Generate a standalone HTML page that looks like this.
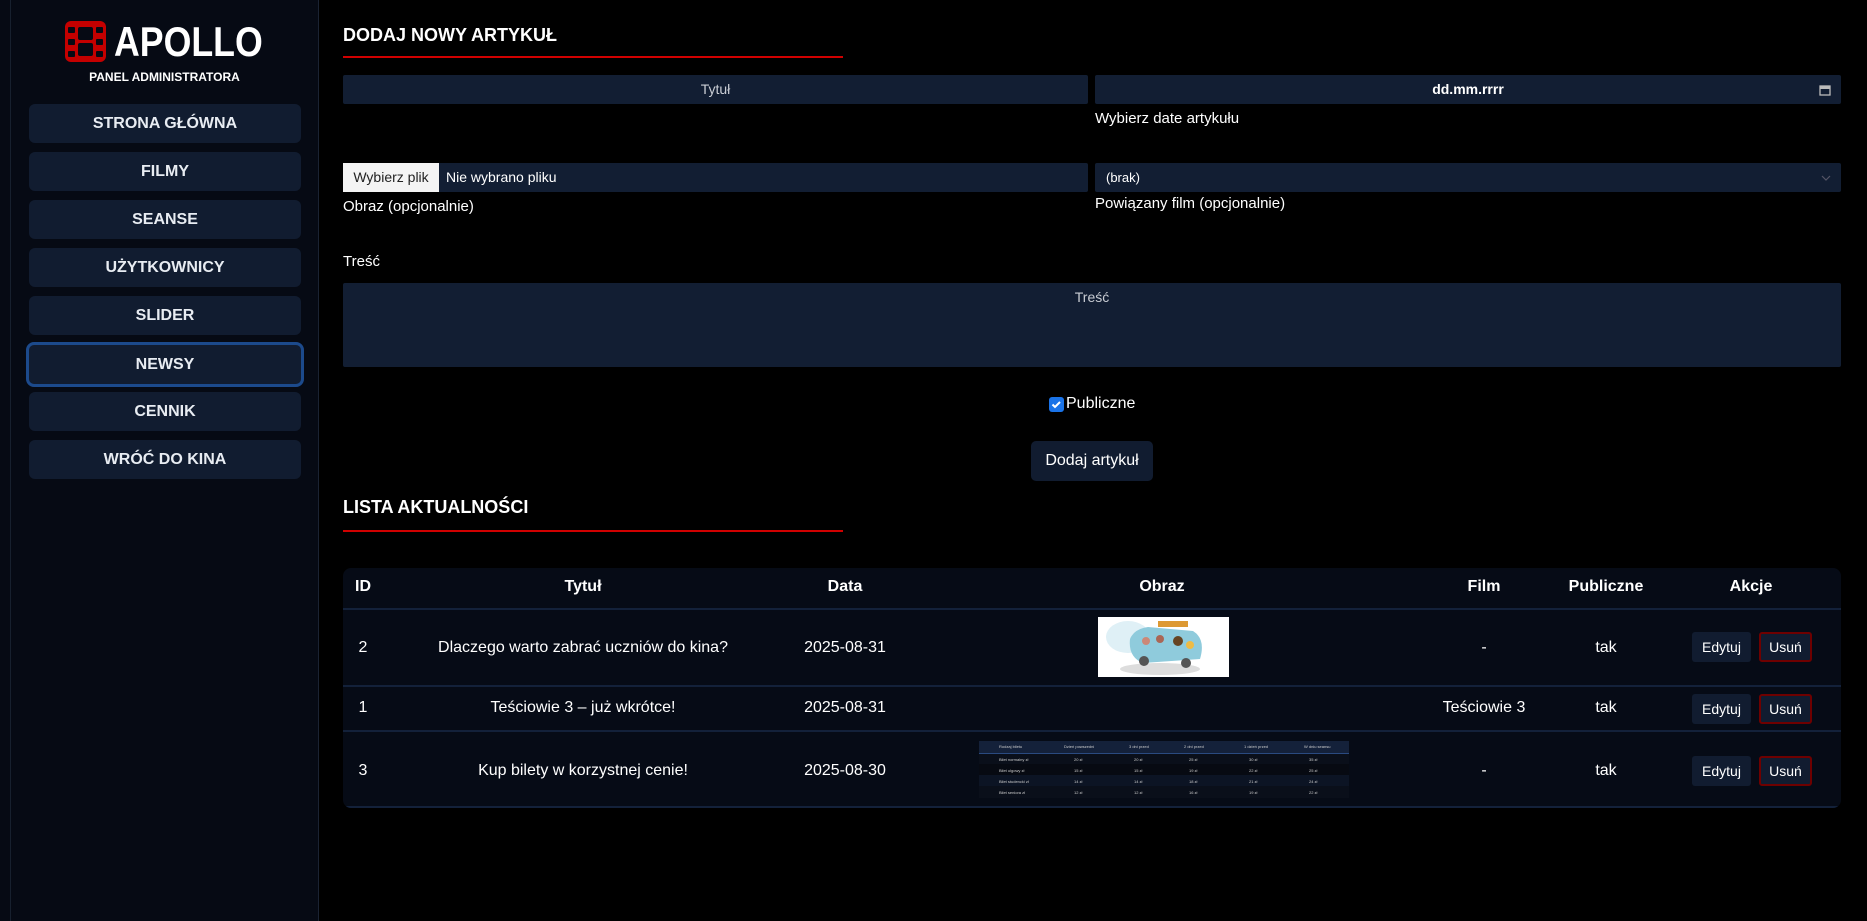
<!DOCTYPE html>
<html><head><meta charset="utf-8">
<style>
*{box-sizing:border-box;margin:0;padding:0}
html,body{width:1867px;height:921px;background:#000;overflow:hidden;font-family:"Liberation Sans",Arial,sans-serif;color:#fff}
.side{position:absolute;left:0;top:0;width:319px;height:921px;background:#060a14;border-right:1px solid #1a2333}
.side:before{content:"";position:absolute;left:10px;top:0;width:1px;height:921px;background:#17202e}
.logo{position:absolute;left:65px;top:21px;width:41px;height:41px;background:#c40000;border-radius:6px}
.logo i{position:absolute;width:7px;height:6px;background:#060a14;border-radius:1px}
.logo b{position:absolute;left:13px;width:15px;height:13px;background:#060a14;border-radius:2px}
.apollo{position:absolute;left:114px;top:18px;font-size:42px;font-weight:bold;transform:scaleX(0.85);transform-origin:left top}
.panel{position:absolute;left:0;width:319px;text-align:center;top:70px;font-size:12px;font-weight:bold;padding-left:10px}
.nav{position:absolute;left:29px;width:272px;height:39px;background:#111c30;border-radius:6px;text-align:center;line-height:39px;font-size:16px;font-weight:bold;color:#e8ecf2}
.nav.act{left:26px;width:278px;height:45px;line-height:39px;border:3px solid #1c4a8c;border-radius:8px}
.h{position:absolute;left:343px;font-size:18px;font-weight:bold}
.red{position:absolute;left:343px;width:500px;height:2px;background:#d00000}
.inp{position:absolute;background:#121e33;border-radius:2px;color:#c9cdd4;font-size:14px;text-align:center}
.lbl{position:absolute;font-size:15px;color:#fff}
.tbl{position:absolute;left:343px;top:568px;width:1498px;height:240px;background:#060b16;border-radius:8px;overflow:hidden}
.line{position:absolute;left:0;width:1498px;height:2px;background:#13213a}
.t{position:absolute;font-size:16px;transform:translateX(-50%);white-space:nowrap}
.th{font-weight:bold}
.btn{position:absolute;height:30px;line-height:30px;font-size:14px;text-align:center;background:#111c30;border-radius:3px;color:#fff}
.del{border:2px solid #6e0000;line-height:26px}
</style></head><body>
<div class="side">
  <div class="logo">
    <i style="left:3px;top:6px"></i><i style="left:3px;top:18px"></i><i style="left:3px;top:30px"></i>
    <i style="left:31px;top:6px"></i><i style="left:31px;top:18px"></i><i style="left:31px;top:30px"></i>
    <b style="top:6px"></b><b style="top:22px"></b>
  </div>
  <div class="apollo">APOLLO</div>
  <div class="panel">PANEL ADMINISTRATORA</div>
  <div class="nav" style="top:104px">STRONA GŁÓWNA</div>
  <div class="nav" style="top:152px">FILMY</div>
  <div class="nav" style="top:200px">SEANSE</div>
  <div class="nav" style="top:248px">UŻYTKOWNICY</div>
  <div class="nav" style="top:296px">SLIDER</div>
  <div class="nav act" style="top:342px">NEWSY</div>
  <div class="nav" style="top:392px">CENNIK</div>
  <div class="nav" style="top:440px">WRÓĆ DO KINA</div>
</div>

<div class="h" style="top:25px">DODAJ NOWY ARTYKUŁ</div>
<div class="red" style="top:56px"></div>

<div class="inp" style="left:343px;top:75px;width:745px;height:29px;line-height:29px">Tytuł</div>
<div class="inp" style="left:1095px;top:75px;width:746px;height:29px;line-height:29px;color:#fff;font-weight:bold">dd.mm.rrrr
  <svg style="position:absolute;right:10px;top:9px" width="12" height="12" viewBox="0 0 12 12"><rect x="1" y="2" width="10" height="9" fill="none" stroke="#bbb" stroke-width="1.3"/><rect x="1" y="2" width="10" height="3" fill="#bbb"/></svg></div>
<div class="lbl" style="left:1095px;top:110px">Wybierz date artykułu</div>

<div class="inp" style="left:343px;top:163px;width:745px;height:29px;line-height:29px;text-align:left;color:#fff">
  <span style="display:inline-block;background:#f4f4f4;color:#222;width:96px;height:29px;text-align:center;margin-right:7px">Wybierz plik</span>Nie wybrano pliku</div>
<div class="lbl" style="left:343px;top:198px">Obraz (opcjonalnie)</div>
<div class="inp" style="left:1095px;top:163px;width:746px;height:29px;line-height:29px;text-align:left;padding-left:11px;color:#fff;font-size:13px">(brak)
  <svg style="position:absolute;right:10px;top:12px" width="10" height="6" viewBox="0 0 10 6"><path d="M1 1l4 4 4-4" fill="none" stroke="#556" stroke-width="1.2"/></svg></div>
<div class="lbl" style="left:1095px;top:195px">Powiązany film (opcjonalnie)</div>

<div class="lbl" style="left:343px;top:253px">Treść</div>
<div class="inp" style="left:343px;top:283px;width:1498px;height:84px;padding-top:6px;font-size:14px">Treść</div>

<div style="position:absolute;left:1049px;top:397px;width:15px;height:15px;background:#1a73e8;border-radius:3px">
  <svg width="15" height="15" viewBox="0 0 15 15"><path d="M3.5 7.5l2.5 2.5 5-5" fill="none" stroke="#fff" stroke-width="2"/></svg></div>
<div class="lbl" style="left:1066px;top:395px;font-size:16px">Publiczne</div>
<div class="btn" style="left:1031px;top:441px;width:122px;height:40px;line-height:40px;font-size:16px;border-radius:5px">Dodaj artykuł</div>

<div class="h" style="top:497px">LISTA AKTUALNOŚCI</div>
<div class="red" style="top:530px"></div>

<div class="tbl">
  <div class="line" style="top:40px"></div>
  <div class="line" style="top:117px"></div>
  <div class="line" style="top:162px"></div>
  <div class="line" style="top:238px"></div>
  <div class="t th" style="left:20px;top:10px">ID</div>
  <div class="t th" style="left:240px;top:10px">Tytuł</div>
  <div class="t th" style="left:502px;top:10px">Data</div>
  <div class="t th" style="left:819px;top:10px">Obraz</div>
  <div class="t th" style="left:1141px;top:10px">Film</div>
  <div class="t th" style="left:1263px;top:10px">Publiczne</div>
  <div class="t th" style="left:1408px;top:10px">Akcje</div>

  <div class="t" style="left:20px;top:71px">2</div>
  <div class="t" style="left:240px;top:71px">Dlaczego warto zabrać uczniów do kina?</div>
  <div class="t" style="left:502px;top:71px">2025-08-31</div>
  <svg style="position:absolute;left:755px;top:49px" width="131" height="60" viewBox="0 0 131 60">
    <rect width="131" height="60" fill="#fff"/>
    <ellipse cx="30" cy="20" rx="22" ry="16" fill="#dff0f6"/>
    <ellipse cx="62" cy="52" rx="40" ry="6" fill="#ddd"/>
    <path d="M32 22 Q36 12 50 10 L95 14 Q108 22 102 42 L45 46 Q30 40 32 22Z" fill="#8fcbdc"/>
    <circle cx="46" cy="44" r="5" fill="#555"/><circle cx="88" cy="46" r="5" fill="#555"/>
    <circle cx="48" cy="24" r="4" fill="#c87"/><circle cx="62" cy="22" r="4" fill="#a65"/><circle cx="80" cy="24" r="5" fill="#642"/><circle cx="92" cy="28" r="4" fill="#eb4"/>
    <rect x="60" y="4" width="30" height="6" fill="#d93"/>
  </svg>
  <div class="t" style="left:1141px;top:71px">-</div>
  <div class="t" style="left:1263px;top:71px">tak</div>
  <div class="btn" style="left:1349px;top:64px;width:59px">Edytuj</div>
  <div class="btn del" style="left:1416px;top:64px;width:53px">Usuń</div>

  <div class="t" style="left:20px;top:131px">1</div>
  <div class="t" style="left:240px;top:131px">Teściowie 3 – już wkrótce!</div>
  <div class="t" style="left:502px;top:131px">2025-08-31</div>
  <div class="t" style="left:1141px;top:131px">Teściowie 3</div>
  <div class="t" style="left:1263px;top:131px">tak</div>
  <div class="btn" style="left:1349px;top:126px;width:59px">Edytuj</div>
  <div class="btn del" style="left:1416px;top:126px;width:53px">Usuń</div>

  <div class="t" style="left:20px;top:194px">3</div>
  <div class="t" style="left:240px;top:194px">Kup bilety w korzystnej cenie!</div>
  <div class="t" style="left:502px;top:194px">2025-08-30</div>
  <svg style="position:absolute;left:636px;top:173px" width="370" height="57" viewBox="0 0 370 57" font-family="Liberation Sans" font-size="4" fill="#ccc">
    <rect width="370" height="57" fill="#0a0f1a"/>
    <rect width="370" height="12" fill="#14213a"/>
    <rect y="12" width="370" height="1" fill="#2a4a80"/>
    <rect y="23" width="370" height="11" fill="#070a12"/>
    <rect y="34" width="370" height="11" fill="#0c1424"/>
    <text x="20" y="7">Rodzaj biletu</text><text x="85" y="7">Dzień powszedni</text><text x="150" y="7">3 dni przed</text><text x="205" y="7">2 dni przed</text><text x="265" y="7">1 dzień przed</text><text x="325" y="7">W dniu seansu</text>
    <text x="20" y="20">Bilet normalny zł</text><text x="95" y="20">20 zł</text><text x="155" y="20">20 zł</text><text x="210" y="20">25 zł</text><text x="270" y="20">30 zł</text><text x="330" y="20">35 zł</text>
    <text x="20" y="31">Bilet ulgowy zł</text><text x="95" y="31">15 zł</text><text x="155" y="31">15 zł</text><text x="210" y="31">19 zł</text><text x="270" y="31">22 zł</text><text x="330" y="31">25 zł</text>
    <text x="20" y="42">Bilet studencki zł</text><text x="95" y="42">14 zł</text><text x="155" y="42">14 zł</text><text x="210" y="42">18 zł</text><text x="270" y="42">21 zł</text><text x="330" y="42">24 zł</text>
    <text x="20" y="53">Bilet seniora zł</text><text x="95" y="53">12 zł</text><text x="155" y="53">12 zł</text><text x="210" y="53">16 zł</text><text x="270" y="53">19 zł</text><text x="330" y="53">22 zł</text>
  </svg>
  <div class="t" style="left:1141px;top:194px">-</div>
  <div class="t" style="left:1263px;top:194px">tak</div>
  <div class="btn" style="left:1349px;top:188px;width:59px">Edytuj</div>
  <div class="btn del" style="left:1416px;top:188px;width:53px">Usuń</div>
</div>
</body></html>
